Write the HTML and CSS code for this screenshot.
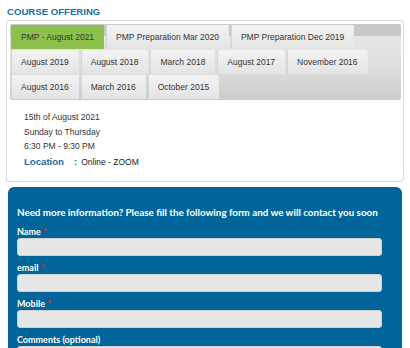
FILE: index.html
```html
<!DOCTYPE html>
<html>
<head>
<meta charset="utf-8">
<link rel="stylesheet" href="styles.css">
</head>
<body>
<div class="page">
  <h2 class="title">COURSE OFFERING</h2>
  <div class="offer-box">
    <div class="tabs">
      <div class="tab active">PMP - August 2021</div>
      <div class="tab">PMP Preparation Mar 2020</div>
      <div class="tab">PMP Preparation Dec 2019</div>
      <div class="tab">August 2019</div>
      <div class="tab">August 2018</div>
      <div class="tab">March 2018</div>
      <div class="tab">August 2017</div>
      <div class="tab">November 2016</div>
      <div class="tab">August 2016</div>
      <div class="tab">March 2016</div>
      <div class="tab">October 2015</div>
    </div>
    <div class="details">
      <div class="line">15th of August 2021</div>
      <div class="line">Sunday to Thursday</div>
      <div class="line">6:30 PM - 9:30 PM</div>
      <div class="line loc"><span class="loc-label">Location</span><span class="loc-colon">:</span><span class="loc-value">Online - ZOOM</span></div>
    </div>
  </div>
  <div class="form-box">
    <div class="form-title">Need more information? Please fill the following form and we will contact you soon</div>
    <div class="field">
      <label class="lbl">Name <span class="req">*</span></label>
      <div class="input"></div>
    </div>
    <div class="field">
      <label class="lbl">email <span class="req">*</span></label>
      <div class="input"></div>
    </div>
    <div class="field">
      <label class="lbl">Mobile <span class="req">*</span></label>
      <div class="input"></div>
    </div>
    <div class="field">
      <label class="lbl">Comments (optional)</label>
      <div class="input"></div>
    </div>
  </div>
</div>
</body>
</html>
```
FILE: styles.css
```css
html, body {
  margin: 0;
  padding: 0;
  background: #ffffff;
  overflow: hidden;
}
body {
  font-family: "Liberation Sans", Arial, sans-serif;
  color: #333333;
}
.page {
  padding: 6px 0 0 6px;
  width: 398px;
}
.title {
  margin: 0 0 2px 1px;
  font-size: 9.6px;
  line-height: 12px;
  font-weight: bold;
  color: #1b6ea3;
}
.offer-box {
  border: 1px solid #dcdcdc;
  border-radius: 3px;
  padding: 3px 2px 0 3px;
  height: 162px;
  box-sizing: border-box;
  width: 398px;
}
.tabs {
  display: flex;
  flex-wrap: wrap;
  gap: 1px 2px;
  padding: 1px;
  background: linear-gradient(#c9c9c9 0, #c9c9c9 12px, #e6e6e6 12px, #dedede 45px, #cbcbcb 100%);
  border-radius: 2px;
}
.tab {
  height: 24px;
  line-height: 24px;
  padding: 0 9px;
  font-size: 8.5px;
  color: #333333;
  background: linear-gradient(#f3f3f3, #e4e4e4);
  border-left: 1px solid #d4d4d4;
  border-right: 1px solid #e9e9e9;
  white-space: nowrap;
}
.tab.active {
  background: #8cc14c;
  border-color: #8cc14c;
}
.details {
  padding: 10px 0 0 14px;
  font-size: 8.5px;
}
.line {
  line-height: 14.7px;
}
.loc {
  margin-top: 1px;
}
.loc-label {
  font-weight: bold;
  font-size: 9.6px;
  color: #1b6ea3;
}
.loc-colon {
  font-weight: bold;
  font-size: 9.6px;
  color: #1b6ea3;
  margin: 0 4px 0 10px;
}
.loc-value {
  color: #222222;
}
.form-box {
  margin: 5px 0 0 2px;
  width: 394px;
  box-sizing: border-box;
  background: #02659a;
  border-radius: 6px 6px 0 0;
  padding: 19px 20px 0 9px;
  height: 200px;
}
.form-title {
  font-family: "Lato", sans-serif;
  font-weight: bold;
  font-size: 9.8px;
  line-height: 12px;
  color: #ffffff;
  margin-bottom: 8px;
  white-space: nowrap;
}
.field {
  margin-bottom: 6px;
}
.lbl {
  display: block;
  font-family: "Lato", sans-serif;
  font-weight: bold;
  font-size: 9px;
  line-height: 12px;
  color: #ffffff;
}
.req {
  color: #e0202a;
}
.input {
  height: 18px;
  box-sizing: border-box;
  width: 365px;
  background: #e6e6e6;
  border: 1px solid #d0d0d0;
  border-radius: 3px;
}
```
